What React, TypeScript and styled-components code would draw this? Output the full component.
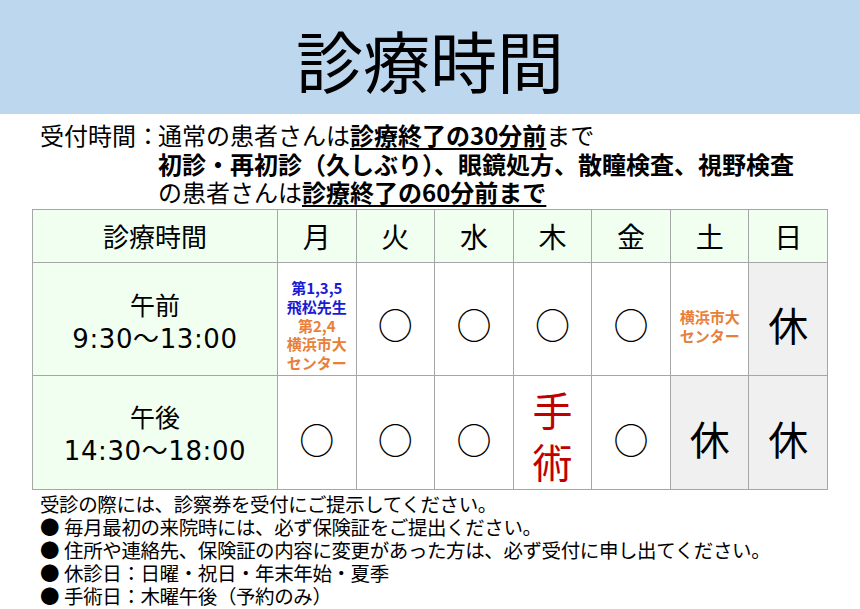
import styled, { createGlobalStyle } from "styled-components";

const Global = createGlobalStyle`
  html, body { margin: 0; padding: 0; background: #fff; }
  body { font-family: "Noto Sans CJK JP", "Noto Sans", sans-serif; color: #000; }
`;

const Page = styled.div`
  width: 860px;
  height: 609px;
  overflow: hidden;
  display: flex;
  flex-direction: column;
`;

const Banner = styled.header`
  height: 114px;
  background: #bdd7ee;
  display: flex;
  align-items: center;
  justify-content: center;
`;

const Title = styled.h1`
  margin: 0;
  font-size: 67px;
  font-weight: 400;
  line-height: 1;
  padding-top: 2px;
`;

const Reception = styled.div`
  display: grid;
  grid-template-columns: 118px auto;
  padding: 7px 0 0 40px;
  font-size: 24px;
  line-height: 28.5px;
  height: 88px;
`;

const Label = styled.span`
  white-space: nowrap;
`;

const Lines = styled.div`
  display: flex;
  flex-direction: column;
  white-space: nowrap;
`;

const Strong = styled.b<{ $underline?: boolean }>`
  font-weight: 700;
  text-decoration: ${(p) => (p.$underline ? "underline" : "none")};
  text-underline-offset: 3px;
  text-decoration-thickness: 2px;
`;

const Table = styled.div`
  margin-left: 32px;
  width: 796px;
  display: grid;
  grid-template-columns: 244px repeat(7, 1fr);
  grid-template-rows: 52px 112px 113px;
  gap: 1px;
  padding: 1px;
  box-sizing: border-box;
  height: 281px;
  background: #a6a6a6;
`;

const Cell = styled.div<{ $bg?: "head" | "off"; $shift?: number }>`
  background: ${(p) =>
    p.$bg === "head" ? "#f0fff0" : p.$bg === "off" ? "#f0f0f0" : "#fff"};
  display: flex;
  flex-direction: column;
  align-items: center;
  justify-content: center;
  text-align: center;
  box-sizing: border-box;
  padding-top: ${(p) => p.$shift ?? 0}px;
`;

const HeadText = styled.span`
  font-size: 26px;
  line-height: 1;
`;

const DayText = styled.span`
  font-size: 28px;
  line-height: 1;
`;

const PeriodName = styled.span`
  font-size: 25px;
  line-height: 35px;
`;

const PeriodTime = styled.span`
  font-family: "DejaVu Sans", "Noto Sans CJK JP", sans-serif;
  font-size: 26px;
  letter-spacing: 0.6px;
  line-height: 35px;
`;

const Mark = styled.span`
  font-size: 35px;
  line-height: 1;
`;

const Closed = styled.span`
  font-size: 40px;
  line-height: 1;
`;

const Surgery = styled.span`
  color: #c00000;
  font-size: 40px;
  line-height: 52px;
  width: 42px;
  word-break: break-all;
`;

const Note = styled.span<{ $color: string }>`
  color: ${(p) => p.$color};
  font-size: 15px;
  font-weight: 700;
  line-height: 18.8px;
  white-space: nowrap;
`;

const Notes = styled.ul`
  list-style: none;
  margin: 2px 0 0 40px;
  padding: 0;
  font-size: 19.5px;
  line-height: 23px;
  letter-spacing: -0.4px;
`;

const NoteItem = styled.li`
  white-space: nowrap;
`;

const Bullet = styled.span`
  margin-right: 5px;
`;

const BLUE = "#1a1ad6";
const ORANGE = "#e8803a";

const days = ["月", "火", "水", "木", "金", "土", "日"];
const bullets = [
  "毎月最初の来院時には、必ず保険証をご提出ください。",
  "住所や連絡先、保険証の内容に変更があった方は、必ず受付に申し出てください。",
  "休診日：日曜・祝日・年末年始・夏季",
  "手術日：木曜午後（予約のみ）",
];

export default function App() {
  return (
    <Page>
      <Global />
      <Banner>
        <Title>診療時間</Title>
      </Banner>

      <Reception>
        <Label>受付時間：</Label>
        <Lines>
          <span>
            通常の患者さんは<Strong $underline>診療終了の30分前</Strong>まで
          </span>
          <span>
            <Strong>初診・再初診（久しぶり）、眼鏡処方、散瞳検査、視野検査</Strong>
          </span>
          <span>
            の患者さんは<Strong $underline>診療終了の60分前まで</Strong>
          </span>
        </Lines>
      </Reception>

      <Table>
        <Cell $bg="head">
          <HeadText>診療時間</HeadText>
        </Cell>
        {days.map((d) => (
          <Cell key={d} $bg="head">
            <DayText>{d}</DayText>
          </Cell>
        ))}

        <Cell $bg="head" $shift={5}>
          <PeriodName>午前</PeriodName>
          <PeriodTime>9:30～13:00</PeriodTime>
        </Cell>
        <Cell $shift={14}>
          <Note $color={BLUE}>第1,3,5</Note>
          <Note $color={BLUE}>飛松先生</Note>
          <Note $color={ORANGE}>第2,4</Note>
          <Note $color={ORANGE}>横浜市大</Note>
          <Note $color={ORANGE}>センター</Note>
        </Cell>
        <Cell $shift={9}><Mark>○</Mark></Cell>
        <Cell $shift={9}><Mark>○</Mark></Cell>
        <Cell $shift={9}><Mark>○</Mark></Cell>
        <Cell $shift={9}><Mark>○</Mark></Cell>
        <Cell $shift={15}>
          <Note $color={ORANGE}>横浜市大</Note>
          <Note $color={ORANGE}>センター</Note>
        </Cell>
        <Cell $bg="off" $shift={9}><Closed>休</Closed></Cell>

        <Cell $bg="head" $shift={3}>
          <PeriodName>午後</PeriodName>
          <PeriodTime>14:30～18:00</PeriodTime>
        </Cell>
        <Cell $shift={11}><Mark>○</Mark></Cell>
        <Cell $shift={11}><Mark>○</Mark></Cell>
        <Cell $shift={11}><Mark>○</Mark></Cell>
        <Cell $shift={4}><Surgery>手術</Surgery></Cell>
        <Cell $shift={11}><Mark>○</Mark></Cell>
        <Cell $bg="off" $shift={11}><Closed>休</Closed></Cell>
        <Cell $bg="off" $shift={11}><Closed>休</Closed></Cell>
      </Table>

      <Notes>
        <NoteItem>受診の際には、診察券を受付にご提示してください。</NoteItem>
        {bullets.map((b) => (
          <NoteItem key={b}>
            <Bullet>●</Bullet>
            {b}
          </NoteItem>
        ))}
      </Notes>
    </Page>
  );
}
